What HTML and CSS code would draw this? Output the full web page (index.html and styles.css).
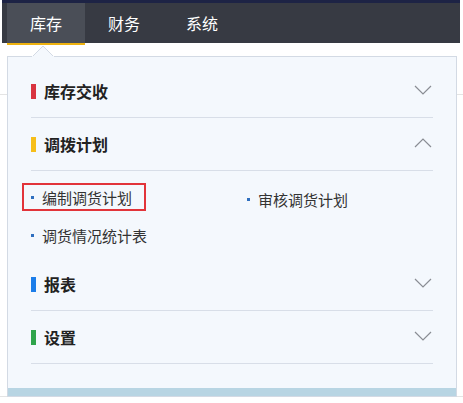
FILE: index.html
```html
<!DOCTYPE html>
<html lang="zh-CN">
<head>
  <meta charset="UTF-8">
  <meta name="viewport" content="width=device-width, initial-scale=1.0">
  <title>库存</title>
  <link rel="stylesheet" href="styles.css">
</head>
<body>
  <div class="topnav">
    <a class="tab active">库存</a>
    <a class="tab">财务</a>
    <a class="tab">系统</a>
  </div>

  <!-- page content behind the dropdown -->
  <div class="page">
    <div class="page-row first"></div>
    <div class="page-row last"></div>
  </div>

  <div class="dropdown">
    <svg class="caret" width="22" height="12" viewBox="0 0 22 12">
      <polygon points="0.5,11.5 11,1 21.5,11.5" fill="#f4f8fd" stroke="#d3dae4" stroke-width="1"/>
      <rect x="0" y="11" width="22" height="2" fill="#f4f8fd"/>
    </svg>

    <div class="section">
      <div class="section-head">
        <span class="mark red"></span>
        <span class="title">库存交收</span>
        <svg class="chev" width="18" height="10" viewBox="0 0 18 10"><polyline points="1,1 9,9 17,1"/></svg>
      </div>
    </div>

    <div class="section open">
      <div class="section-head">
        <span class="mark yellow"></span>
        <span class="title">调拨计划</span>
        <svg class="chev" width="18" height="10" viewBox="0 0 18 10"><polyline points="1,9 9,1 17,9"/></svg>
      </div>
      <ul class="items">
        <li><a class="item marked"><i class="dot"></i>编制调货计划</a></li>
        <li><a class="item"><i class="dot"></i>审核调货计划</a></li>
        <li><a class="item"><i class="dot"></i>调货情况统计表</a></li>
      </ul>
    </div>

    <div class="section">
      <div class="section-head">
        <span class="mark blue"></span>
        <span class="title">报表</span>
        <svg class="chev" width="18" height="10" viewBox="0 0 18 10"><polyline points="1,1 9,9 17,1"/></svg>
      </div>
    </div>

    <div class="section">
      <div class="section-head">
        <span class="mark green"></span>
        <span class="title">设置</span>
        <svg class="chev" width="18" height="10" viewBox="0 0 18 10"><polyline points="1,1 9,9 17,1"/></svg>
      </div>
    </div>

    <div class="foot"></div>
  </div>
</body>
</html>
```

FILE: styles.css
```css
body {
  margin: 0;
  background: #ffffff;
  font-family: "Noto Sans CJK SC", "Noto Sans", sans-serif;
  color: #333333;
  position: relative;
  height: 403px;
  overflow: hidden;
}

.topnav {
  margin: 0 3px 0 2px;
  height: 40px;
  padding-left: 5px;
  display: flex;
  background: #373a43;
  border-top: 3px solid #1d2345;
}

.tab {
  width: 78px;
  height: 40px;
  display: flex;
  align-items: center;
  justify-content: center;
  color: #ffffff;
  font-size: 16px;
  box-sizing: border-box;
}

.tab.active {
  background: #4a4e57;
  border-bottom: 2px solid #eeb20f;
  height: 42px;
}

.page-row {
  height: 51px;
  border-bottom: 1px solid #e4e4e4;
}

.page-row.last {
  height: 301px;
}

.dropdown {
  position: absolute;
  left: 7px;
  top: 56px;
  width: 448px;
  background: #f4f8fd;
  border: 1px solid #d3dae4;
  padding-top: 8px;
}

.caret {
  position: absolute;
  left: 24px;
  top: -12px;
  display: block;
}

.section {
  margin: 0 23px;
  border-bottom: 1px solid #d8dee8;
}

.section-head {
  height: 52px;
  display: flex;
  align-items: center;
}

.mark {
  width: 5px;
  height: 15px;
  margin-right: 8px;
}

.red { background: #d93440; }
.yellow { background: #f6be1a; }
.blue { background: #1b7de9; }
.green { background: #2fa44b; }

.title {
  flex: 1;
  font-size: 16px;
  font-weight: bold;
  color: #222222;
}

.chev {
  margin-right: 1px;
  margin-top: -2px;
}

.chev polyline {
  fill: none;
  stroke: #8a8d94;
  stroke-width: 1.2;
}

.section.open {
  border-bottom: none;
}

.section.open .section-head {
  border-bottom: 1px solid #d8dee8;
}

.items {
  list-style: none;
  margin: 0;
  padding: 10px 0 5px;
  display: grid;
  grid-template-columns: 216px 1fr;
  grid-auto-rows: 36px;
}

.items li {
  display: flex;
  align-items: center;
}

.item {
  display: inline-flex;
  align-items: center;
  height: 24px;
  margin-left: -9px;
  padding: 0 12px 0 7px;
  border: 2px solid transparent;
  font-size: 15px;
  color: #333333;
}

.item.marked {
  border-color: #e2343a;
  margin-top: -4px;
}

.dot {
  width: 3px;
  height: 3px;
  background: #2f6fbf;
  margin-right: 8px;
}

.foot {
  height: 8px;
  margin-top: 24px;
  background: #b8d5e3;
}
```
